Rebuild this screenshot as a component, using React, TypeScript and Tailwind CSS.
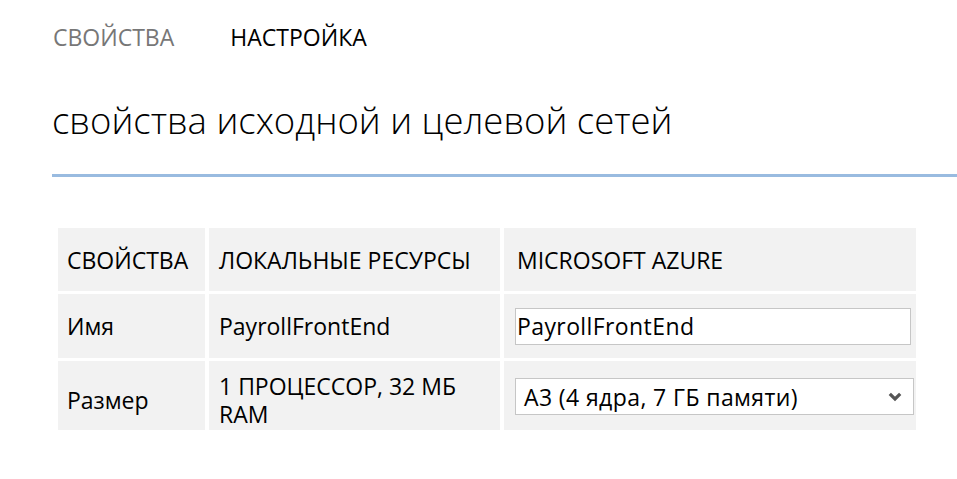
import React from "react";

const font = { fontFamily: '"Open Sans", "Noto Sans", sans-serif' };

function Chevron() {
  return (
    <svg width="14" height="10" viewBox="0 0 14 10" className="shrink-0">
      <path d="M1.8 1.8 L7 7 L12.2 1.8" fill="none" stroke="#555" strokeWidth="3.2" />
    </svg>
  );
}

export default function App() {
  return (
    <div className="w-[957px] h-[479px] bg-white overflow-hidden text-black" style={font}>
      <div className="flex gap-[56px] pl-[53px] pt-[23px] text-[23px] leading-[28px]">
        <span className="text-[#777]">СВОЙСТВА</span>
        <span className="text-black">НАСТРОЙКА</span>
      </div>
      <h1 className="pl-[52px] mt-[47px] text-[36.5px] leading-[44px] font-light">
        свойства исходной и целевой сетей
      </h1>
      <div className="ml-[52px] mt-[32px] h-[3px] bg-[#99bbe0]" />
      <div className="ml-[58px] mt-[51px] grid grid-cols-[147px_291px_412px] gap-x-[4px] gap-y-[3px] text-[23px] leading-[28px]">
        <div className="h-[63px] bg-[#f2f2f2] flex items-center px-[9px]">СВОЙСТВА</div>
        <div className="h-[63px] bg-[#f2f2f2] flex items-center px-[10px]">ЛОКАЛЬНЫЕ РЕСУРСЫ</div>
        <div className="h-[63px] bg-[#f2f2f2] flex items-center px-[13px]">MICROSOFT AZURE</div>

        <div className="h-[64px] bg-[#f2f2f2] flex items-center px-[9px]">Имя</div>
        <div className="h-[64px] bg-[#f2f2f2] flex items-center px-[10px]">PayrollFrontEnd</div>
        <div className="h-[64px] bg-[#f2f2f2] flex items-center pl-[11px] pr-[5px]">
          <div className="w-full h-[37px] bg-white border border-[#c6c6c6] flex items-center px-[1px] tracking-[0.4px]">
            PayrollFrontEnd
          </div>
        </div>

        <div className="h-[69px] bg-[#f2f2f2] flex items-center px-[9px] pt-[9px]">Размер</div>
        <div className="h-[69px] bg-[#f2f2f2] flex items-center px-[10px] pt-[9px]">1 ПРОЦЕССОР, 32 МБ RAM</div>
        <div className="h-[69px] bg-[#f2f2f2] flex items-center pl-[11px] pr-[2px] pt-[2px]">
          <div className="w-full h-[37px] bg-white border border-[#c6c6c6] flex items-center justify-between pl-[8px] pr-[11px] tracking-[0.4px]">
            <span>A3 (4 ядра, 7 ГБ памяти)</span>
            <Chevron />
          </div>
        </div>
      </div>
    </div>
  );
}
